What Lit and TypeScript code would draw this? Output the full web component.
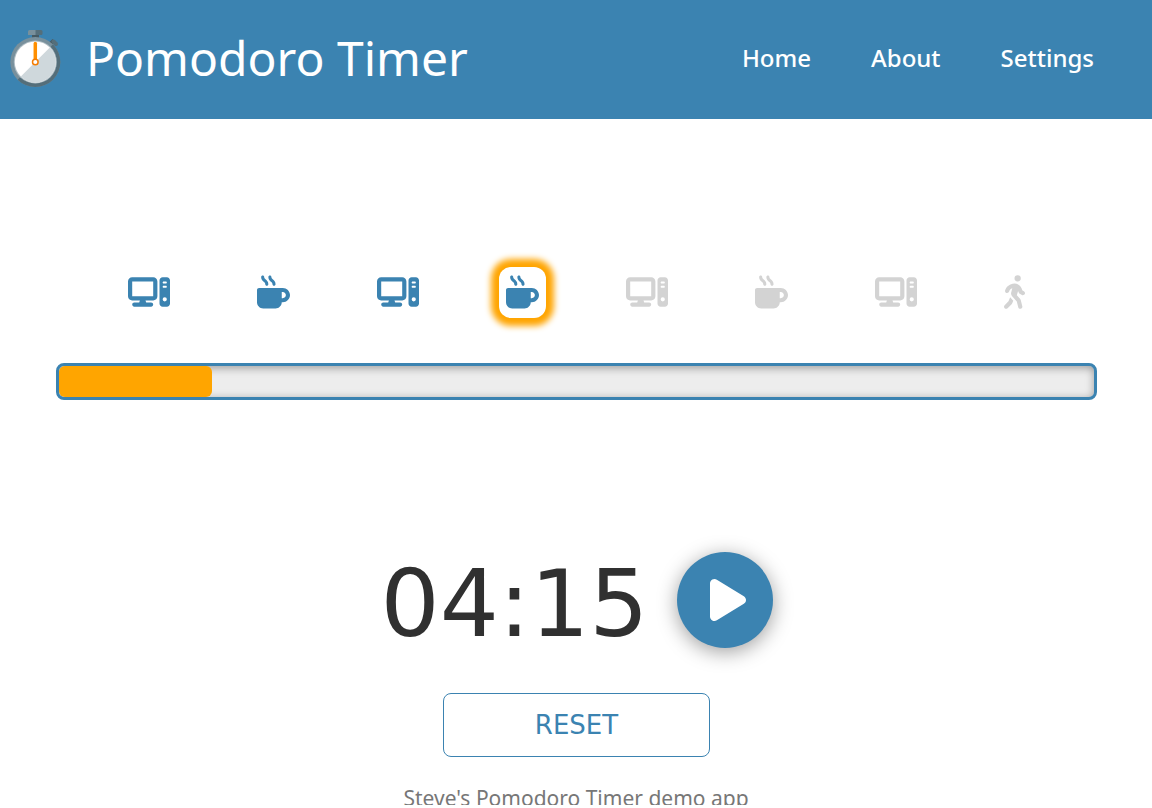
import { LitElement, html, css, svg } from "lit";
import { customElement, property, state } from "lit/decorators.js";

type StepKind = "work" | "break" | "walk";

const ICONS: Record<StepKind, { width: number; label: string; path: string }> = {
  work: {
    width: 640,
    label: "Work",
    path: "M384 96V320H64L64 96H384zM64 32C28.7 32 0 60.7 0 96V320c0 35.3 28.7 64 64 64H181.3l-10.7 32H96c-17.7 0-32 14.3-32 32s14.3 32 32 32H352c17.7 0 32-14.3 32-32s-14.3-32-32-32H277.3l-10.7-32H384c35.3 0 64-28.7 64-64V96c0-35.3-28.7-64-64-64H64zm464 0c-26.5 0-48 21.5-48 48V432c0 26.5 21.5 48 48 48h64c26.5 0 48-21.5 48-48V80c0-26.5-21.5-48-48-48H528zm16 64h32c8.8 0 16 7.2 16 16s-7.2 16-16 16H544c-8.8 0-16-7.2-16-16s7.2-16 16-16zm-16 80c0-8.8 7.2-16 16-16h32c8.8 0 16 7.2 16 16s-7.2 16-16 16H544c-8.8 0-16-7.2-16-16zm32 160a32 32 0 1 1 0 64 32 32 0 1 1 0-64z",
  },
  break: {
    width: 512,
    label: "Short break",
    path: "M88 0C74.7 0 64 10.7 64 24c0 38.9 23.4 59.4 39.1 73.1l1.1 1C120.5 112.3 128 119.9 128 136c0 13.3 10.7 24 24 24s24-10.7 24-24c0-38.9-23.4-59.4-39.1-73.1l-1.1-1C119.5 47.7 112 40.1 112 24c0-13.3-10.7-24-24-24zM32 192c-17.7 0-32 14.3-32 32V416c0 53 43 96 96 96H288c53 0 96-43 96-96h16c61.9 0 112-50.1 112-112s-50.1-112-112-112H352 32zm352 64h16c26.5 0 48 21.5 48 48s-21.5 48-48 48H384V256zM224 24c0-13.3-10.7-24-24-24s-24 10.7-24 24c0 38.9 23.4 59.4 39.1 73.1l1.1 1C232.5 112.3 240 119.9 240 136c0 13.3 10.7 24 24 24s24-10.7 24-24c0-38.9-23.4-59.4-39.1-73.1l-1.1-1C231.5 47.7 224 40.1 224 24z",
  },
  walk: {
    width: 320,
    label: "Long break",
    path: "M160 48a48 48 0 1 1 96 0 48 48 0 1 1 -96 0zM126.5 199.3c-1 .4-1.9 .8-2.9 1.2l-8 3.5c-16.4 7.3-29 21.2-34.7 38.2l-2.6 7.8c-5.6 16.8-23.7 25.8-40.5 20.2s-25.8-23.7-20.2-40.5l2.6-7.8c11.4-34.1 36.6-61.9 69.4-76.5l8-3.5c20.8-9.2 43.3-14 66.1-14c44.6 0 84.8 26.8 101.9 67.9L281 232.7l21.4 10.7c15.8 7.9 22.2 27.1 14.3 42.9s-27.1 22.2-42.9 14.3L247 287.3c-10.3-5.2-18.4-13.8-22.8-24.5l-9.6-23-19.3 65.5 49.5 54c5.4 5.9 9.2 13 11.2 20.8l23 92.1c4.3 17.1-6.1 34.5-23.3 38.8s-34.5-6.1-38.8-23.3l-22-88.1-70.7-77.1c-14.8-16.1-20.3-38.6-14.7-59.7l16.9-63.5zM68.7 398l25-62.4c2.1 3 4.5 5.8 7 8.6l40.7 44.4-14.5 36.2c-2.4 6-6 11.5-10.6 16.1L54.6 502.6c-12.5 12.5-32.8 12.5-45.3 0s-12.5-32.8 0-45.3L68.7 398z",
  },
};

const STEPS: StepKind[] = ["work", "break", "work", "break", "work", "break", "work", "walk"];

@customElement("step-icon")
export class StepIcon extends LitElement {
  @property() kind: StepKind = "work";

  static styles = css`
    :host {
      display: block;
    }
    .icon {
      display: block;
      height: 34px;
      fill: currentColor;
    }
    .work {
      width: 42px;
    }
    .break {
      width: 33px;
    }
    .walk {
      width: 21px;
    }
  `;

  render() {
    const icon = ICONS[this.kind];
    return html`<svg
      class="icon ${this.kind}"
      viewBox="0 0 ${icon.width} 512"
      role="img"
      aria-label=${icon.label}
    >
      ${svg`<path d=${icon.path}></path>`}
    </svg>`;
  }
}

@customElement("app-root")
export class AppRoot extends LitElement {
  @state() private current = 3;
  @state() private remaining = 255.6;
  @state() private running = false;
  private length = 300;
  private timer = 0;

  static styles = css`
    :host {
      --blue: #3b83b1;
      --off: #d3d3d3;
      display: flex;
      flex-direction: column;
      height: calc(100vh - 3px);
      overflow: hidden;
      background: #fff;
      color: #303030;
      font-family: "Noto Sans", "Open Sans", sans-serif;
    }
    .header {
      flex: none;
      display: flex;
      align-items: center;
      justify-content: space-between;
      padding: 24px 58px 27px 8px;
      background: var(--blue);
      color: #fff;
    }
    .brand {
      display: flex;
      align-items: center;
      gap: 24px;
    }
    .logo {
      display: block;
      width: 54px;
      height: 60px;
    }
    .title {
      margin: 0;
      font-size: 48px;
      font-weight: 400;
      line-height: 68px;
    }
    .nav {
      display: flex;
      gap: 60px;
    }
    .link {
      color: inherit;
      font-size: 24px;
      font-weight: 500;
      line-height: 32px;
      text-decoration: none;
    }
    .main {
      flex: none;
      display: flex;
      flex-direction: column;
      padding: 148px 55px 0 56px;
    }
    .steps {
      display: flex;
      justify-content: space-between;
      margin: 0;
      padding: 0 65px;
      list-style: none;
    }
    .step {
      padding: 8px 7px 9px;
      border-radius: 12px;
      color: var(--off);
    }
    .step.reached {
      color: var(--blue);
    }
    .step.current {
      box-shadow: 0 0 6px 8px orange;
    }
    .bar {
      height: 31px;
      margin-top: 45px;
      border: 3px solid var(--blue);
      border-radius: 8px;
      background: #ededed;
      box-shadow: inset 0 2px 8px rgba(0, 0, 0, 0.35);
    }
    .fill {
      height: 100%;
      border-radius: 6px;
      background: orange;
    }
    .clock {
      display: flex;
      align-items: center;
      justify-content: center;
      gap: 28px;
      margin-top: 152px;
    }
    .time {
      padding-top: 8px;
      font-family: "DejaVu Sans", sans-serif;
      font-size: 93px;
      line-height: 88px;
    }
    .play {
      display: flex;
      align-items: center;
      justify-content: center;
      width: 96px;
      height: 96px;
      padding: 0 0 0 6px;
      border: 0;
      border-radius: 50%;
      background: var(--blue);
      color: #fff;
      box-shadow: 0 4px 20px rgba(0, 0, 0, 0.38);
      cursor: pointer;
    }
    .play-icon {
      width: 36px;
      height: 48px;
      fill: currentColor;
    }
    .reset {
      align-self: center;
      width: 267px;
      height: 64px;
      margin-top: 45px;
      border: 1px solid var(--blue);
      border-radius: 8px;
      background: #fff;
      color: var(--blue);
      font-family: "DejaVu Sans", sans-serif;
      font-size: 26px;
      cursor: pointer;
    }
    .footer {
      flex: none;
      padding-top: 25px;
      color: #777;
      font-size: 21px;
      line-height: 32px;
      text-align: center;
    }
  `;

  disconnectedCallback() {
    super.disconnectedCallback();
    clearInterval(this.timer);
  }

  private toggle() {
    this.running = !this.running;
    clearInterval(this.timer);
    if (this.running) {
      this.timer = window.setInterval(() => {
        this.remaining = Math.max(0, this.remaining - 1);
      }, 1000);
    }
  }

  private reset() {
    this.running = false;
    clearInterval(this.timer);
    this.remaining = this.length;
  }

  private get clockText() {
    const two = (n: number) => String(Math.floor(n)).padStart(2, "0");
    return `${two(this.remaining / 60)}:${two(this.remaining % 60)}`;
  }

  render() {
    const percent = (1 - this.remaining / this.length) * 100;
    return html`
      <header class="header">
        <div class="brand">
          <svg class="logo" viewBox="0 -1 54 60" aria-hidden="true">
            <path d="M24 5h7v6h-7z" fill="#455a64" />
            <path d="M20 2.5q0-1.500 1.500-1.500H28v5H20z" fill="#78909c" />
            <path d="M27.500 1H33q1.500 0 1.500 1.500V4.500Q34.500 6 33 6H27.500z" fill="#546e7a" />
            <path d="M42 15.500l4-4" stroke="#455a64" stroke-width="4" />
            <path d="M45.500 12.500l2.500 2.500" stroke="#546e7a" stroke-width="4" stroke-linecap="round" />
            <circle cx="27.300" cy="33" r="25" fill="#78909c" />
            <path d="M45 15.300A25 25 0 0 1 9.600 50.700z" fill="#546e7a" />
            <circle cx="27.300" cy="33" r="21.500" fill="#b0bec5" />
            <circle cx="27.300" cy="33" r="20.500" fill="#fff" />
            <path d="M41.800 18.500A20.500 20.500 0 0 1 12.800 47.500z" fill="#cfd8dc" />
            <path d="M27.300 14.500V30" stroke="#ff8f00" stroke-width="3.500" stroke-linecap="round" />
            <circle cx="27.300" cy="33" r="2.800" fill="#fff" stroke="#f57c00" stroke-width="1.500" />
          </svg>
          <h1 class="title">Pomodoro Timer</h1>
        </div>
        <nav class="nav">
          <a class="link" href="#home">Home</a>
          <a class="link" href="#about">About</a>
          <a class="link" href="#settings">Settings</a>
        </nav>
      </header>
      <main class="main">
        <ol class="steps">
          ${STEPS.map(
            (kind, i) => html`<li
              class="step ${i <= this.current ? "reached" : ""} ${i === this.current ? "current" : ""}"
            >
              <step-icon .kind=${kind}></step-icon>
            </li>`
          )}
        </ol>
        <div
          class="bar"
          role="progressbar"
          aria-label="Elapsed"
          aria-valuenow=${Math.round(percent)}
          aria-valuemin="0"
          aria-valuemax="100"
        >
          <div class="fill" style="width: ${percent}%"></div>
        </div>
        <div class="clock">
          <span class="time">${this.clockText}</span>
          <button class="play" type="button" aria-label=${this.running ? "Pause" : "Start"} @click=${this.toggle}>
            <svg class="play-icon" viewBox="0 0 384 512" aria-hidden="true">
              ${this.running
                ? svg`<path d="M48 64h96v384H48zM240 64h96v384h-96z"></path>`
                : svg`<path d="M73 39c-14.800-9.100-33.400-9.400-48.500-.9S0 62.600 0 80V432c0 17.400 9.400 33.400 24.500 41.900s33.700 8.100 48.500-.9L361 297c14.300-8.700 23-24.200 23-41s-8.700-32.200-23-41L73 39z"></path>`}
            </svg>
          </button>
        </div>
        <button class="reset" type="button" @click=${this.reset}>RESET</button>
      </main>
      <footer class="footer">Steve's Pomodoro Timer demo app</footer>
    `;
  }
}
